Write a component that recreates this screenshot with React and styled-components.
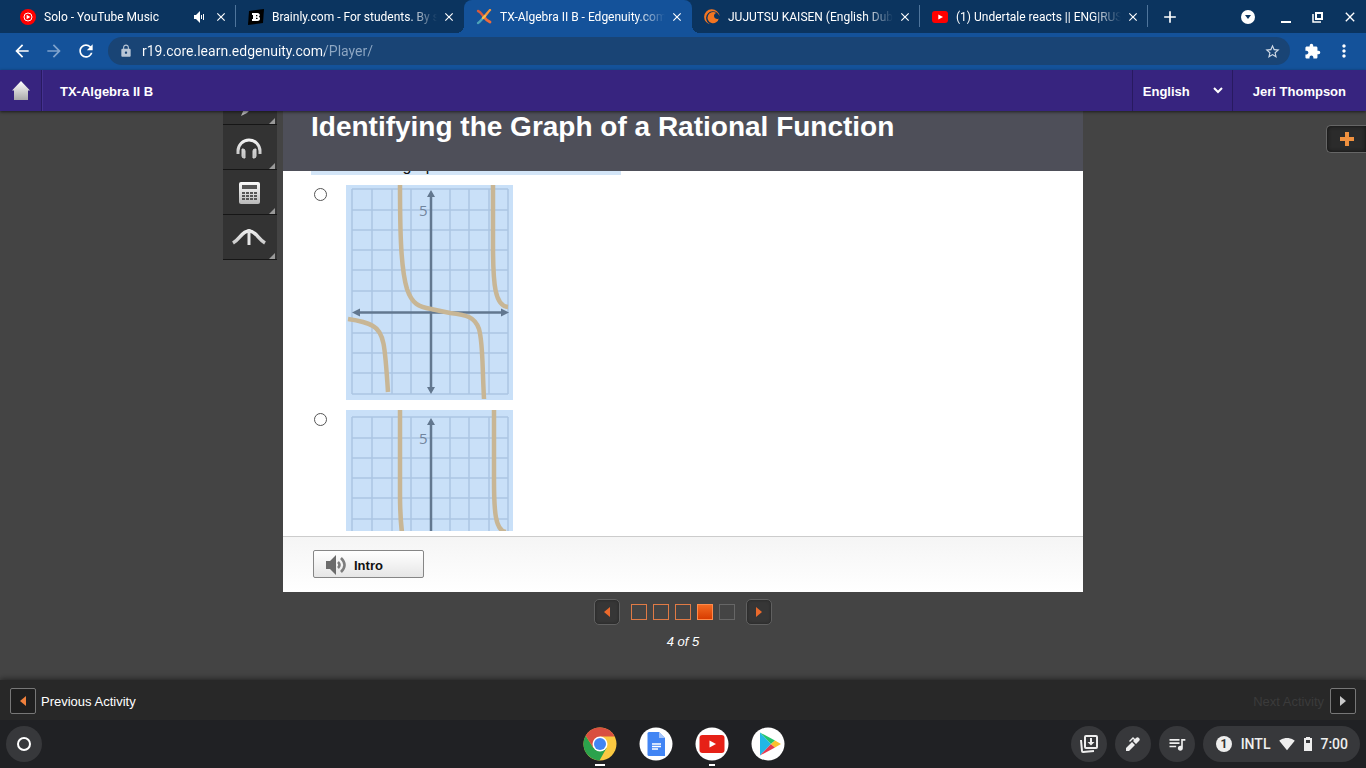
import React from "react";
import styled, { createGlobalStyle, css } from "styled-components";
import {
  MdAdd,
  MdArrowBack,
  MdArrowForward,
  MdClose,
  MdExtension,
  MdLock,
  MdMoreVert,
  MdQueueMusic,
  MdRefresh,
  MdSignalWifi4Bar,
  MdStarBorder,
} from "react-icons/md";

const GlobalStyle = createGlobalStyle`
  * {
    box-sizing: border-box;
  }

  body {
    margin: 0;
    background: #444;
    font-family: "Liberation Sans", Arial, sans-serif;
  }

  button, input, select {
    margin: 0;
    padding: 0;
    border: 0;
    background: none;
    color: inherit;
    font: inherit;
  }
`;

const Page = styled.div`
  display: flex;
  flex-direction: column;
  min-height: 100vh;
`;

/* browser */

const TabStrip = styled.div`
  display: flex;
  align-items: stretch;
  height: 33px;
  padding-left: 8px;
  background: #0b345f;
  color: #fff;
  font: 12px/16px Roboto, sans-serif;
`;

const Tab = styled.div`
  position: relative;
  display: flex;
  align-items: center;
  gap: 4px;
  flex: 0 1 228px;
  min-width: 0;
  padding: 0 6px 0 12px;
  border-right: 1px solid transparent;

  ${({ $active }) =>
    $active &&
    css`
      background: #14529a;
      border-radius: 8px 8px 0 0;

      &::before,
      &::after {
        content: "";
        position: absolute;
        bottom: 0;
        width: 8px;
        height: 8px;
      }

      &::before {
        left: -8px;
        background: radial-gradient(circle at 0 0, transparent 8px, #14529a 8px);
      }

      &::after {
        right: -9px;
        background: radial-gradient(circle at 100% 0, transparent 8px, #14529a 8px);
      }
    `}

  ${({ $divider }) =>
    $divider &&
    css`
      border-image: linear-gradient(transparent 6px, #4f759c 6px, #4f759c 26px, transparent 26px) 1;
      border-width: 0 1px 0 0;
    `}
`;

const TabTitle = styled.span`
  flex: 1;
  min-width: 0;
  overflow: hidden;
  white-space: nowrap;
  mask-image: linear-gradient(to left, transparent, #000 28px);
`;

const IconButton = styled.button`
  display: flex;
  flex: none;
  align-items: center;
  justify-content: center;
  width: ${({ $size }) => $size || 16}px;
  height: ${({ $size }) => $size || 16}px;
  color: ${({ $color }) => $color || "#fff"};
`;

const Favicon = styled.svg`
  flex: none;
  width: 16px;
  height: 16px;
  margin-right: 4px;
`;

const NewTab = styled.div`
  display: flex;
  align-items: center;
  justify-content: space-between;
  flex: 1;
  padding: 0 18px 0 12px;
`;

const WindowControls = styled.div`
  display: flex;
  align-items: center;
  gap: 12px;
  padding-right: 6px;
`;

const Toolbar = styled.div`
  display: flex;
  align-items: center;
  gap: 12px;
  height: 37px;
  padding: 0 12px 1px;
  background: #14529a;
`;

const Address = styled.div`
  display: flex;
  align-items: center;
  flex: 1;
  gap: 9px;
  height: 28px;
  padding: 0 8px 0 11px;
  border-radius: 14px;
  background: #194475;
  color: #b9c6d6;
`;

const UrlInput = styled.input`
  flex: 1;
  min-width: 0;
  height: 28px;
  font: 14px/28px Roboto, sans-serif;
  color: transparent;
  background: linear-gradient(to right, #fff 183px, #8fa8c4 183px);
  background-clip: text;
`;

/* course */

const CourseBar = styled.header`
  position: relative;
  z-index: 1;
  display: flex;
  align-items: stretch;
  height: 41px;
  background: #37247f;
  box-shadow: 0 1px 3px rgba(0, 0, 0, 0.6);
  color: #fff;
  font-size: 13px;
  font-weight: bold;
`;

const HomeLink = styled.a`
  display: flex;
  align-items: center;
  justify-content: center;
  width: 42px;
  border-right: 1px solid #281a60;
`;

const CourseTitle = styled.div`
  display: flex;
  align-items: center;
  flex: 1;
  padding: 2px 0 0 17px;
  border-left: 1px solid #443290;
`;

const Language = styled.label`
  position: relative;
  display: flex;
  align-items: center;
  width: 101px;
  border-left: 1px solid #281a60;
  border-right: 1px solid #281a60;

  svg {
    position: absolute;
    right: 9px;
    pointer-events: none;
  }
`;

const LanguageSelect = styled.select`
  width: 100%;
  height: 100%;
  padding: 2px 0 0 10px;
  appearance: none;
  outline: none;
`;

const UserName = styled.a`
  display: flex;
  align-items: center;
  padding: 2px 20px 0;
  color: #fff;
  text-decoration: none;
`;

const Stage = styled.main`
  position: relative;
  display: grid;
  grid-template-columns: 1fr minmax(0, 800px) 1fr;
  align-content: start;
  align-items: start;
  flex: 1;
  overflow: hidden;
  background: #444;
`;

const Tools = styled.div`
  justify-self: end;
  width: 54px;
  margin: -31px 6px 0 0;
`;

const Tool = styled.button`
  position: relative;
  display: flex;
  align-items: center;
  justify-content: center;
  width: 100%;
  height: 45px;
  padding: 2px 2px 0 0;
  background: #333;
  border-bottom: 1px solid #161616;

  &::after {
    content: "";
    position: absolute;
    right: 2px;
    bottom: 0;
    border: solid transparent;
    border-width: 0 0 6px 6px;
    border-bottom-color: #999;
  }
`;

const Frame = styled.section`
  background: #fff;
`;

const FrameHeader = styled.div`
  height: 60px;
  padding-left: 28px;
  background: #4e4f59;
  overflow: hidden;
`;

const FrameTitle = styled.h1`
  margin: 0;
  color: #fff;
  font-size: 28px;
  line-height: 32px;
  white-space: nowrap;
`;

const Question = styled.div`
  height: 360px;
  margin-bottom: 5px;
  padding-left: 28px;
  overflow: hidden;
`;

const Prompt = styled.p`
  width: 310px;
  margin: -14px 0 10px;
  background: #d3e5f7;
  color: #111;
  font-size: 16px;
  line-height: 18px;
  white-space: nowrap;
`;

const Choice = styled.label`
  display: flex;
  align-items: flex-start;
  gap: 19px;
  margin-bottom: 10px;
  padding-left: 3px;
`;

const Radio = styled.input`
  width: 13px;
  height: 13px;
  margin-top: 3px;
  border: 1px solid #555;
  border-radius: 50%;
  appearance: none;
  background: #fff;
`;

const GraphSvg = styled.svg`
  display: block;
  width: 167px;
  height: 215px;
  background: #c9e0f8;
  font: 15px "Open Sans", sans-serif;
`;

const FrameFooter = styled.div`
  display: flex;
  align-items: flex-start;
  height: 56px;
  padding: 13px 30px;
  border-top: 1px solid #ccc;
  background: linear-gradient(#f5f5f5, #fff);
`;

const IntroButton = styled.button`
  display: flex;
  align-items: center;
  gap: 7px;
  width: 111px;
  height: 28px;
  padding: 2px 0 0 12px;
  border: 1px solid #868686;
  border-radius: 2px;
  background: linear-gradient(#fff, #e6e6e6);
  color: #111;
  font-size: 13px;
  font-weight: bold;
`;

const Pager = styled.nav`
  display: flex;
  flex-direction: column;
  align-items: center;
  grid-column: 2;
  gap: 9px;
  padding-top: 7px;
`;

const PagerRow = styled.div`
  display: flex;
  align-items: center;
  gap: 11px;
`;

const Steps = styled.div`
  display: flex;
  gap: 6px;
`;

const stepColor = { done: "#e07a45", current: "#ff8a4a", locked: "#666" };

const Step = styled.button`
  width: 16px;
  height: 16px;
  border: 1px solid ${({ $state }) => stepColor[$state]};
  background: ${({ $state }) =>
    $state === "current" ? "linear-gradient(#f26a22, #d83c00)" : "none"};
`;

const ArrowButton = styled.button`
  display: flex;
  flex: none;
  align-items: center;
  justify-content: center;
  width: 26px;
  height: 26px;
  border: 1px solid ${({ $flat }) => ($flat ? "#777" : "#606060")};
  border-radius: ${({ $flat }) => ($flat ? 2 : 5)}px;
  background: ${({ $flat }) => ($flat ? "#1f1f1f" : "#363636")};
  box-shadow: ${({ $flat }) => ($flat ? "none" : "inset 0 0 3px #222")};
`;

const PageCount = styled.div`
  color: #fff;
  font-size: 13px;
  font-style: italic;
  line-height: 16px;
`;

const AddPanel = styled.button`
  position: absolute;
  top: 14px;
  right: 0;
  display: flex;
  align-items: center;
  justify-content: center;
  width: 40px;
  height: 28px;
  border: 1px solid #666;
  border-right: 0;
  border-radius: 5px 0 0 5px;
  background: #2b2b2b;
  box-shadow: inset 0 0 4px #111;
`;

const ActivityBar = styled.footer`
  position: relative;
  display: flex;
  align-items: center;
  justify-content: space-between;
  height: 40px;
  padding: 2px 10px 0;
  background: #282828;
  box-shadow: 0 -1px 6px rgba(0, 0, 0, 0.5);
  color: #fff;
  font-size: 13px;
`;

const Activity = styled.div`
  display: flex;
  align-items: center;
  gap: ${({ $disabled }) => ($disabled ? 6 : 5)}px;
  color: ${({ $disabled }) => ($disabled ? "#3b3b3b" : "#fff")};
`;

/* shelf */

const Shelf = styled.div`
  position: relative;
  display: grid;
  grid-template-columns: 1fr auto 1fr;
  align-items: center;
  height: 48px;
  padding: 0 6px;
  background: #202124;
`;

const RoundButton = styled.button`
  display: flex;
  align-items: center;
  justify-content: center;
  width: 36px;
  height: 36px;
  border-radius: 50%;
  background: #37383b;
  color: #eee;
`;

const Apps = styled.div`
  display: flex;
  gap: 22px;
  padding-left: 2px;
`;

const AppButton = styled.button`
  position: relative;
  width: 34px;
  height: 34px;

  svg {
    display: block;
  }

  &::after {
    content: "";
    position: absolute;
    bottom: -5px;
    left: 50%;
    width: ${({ $mark }) => $mark || 0}px;
    height: 2px;
    background: #fff;
    transform: translateX(-50%);
  }
`;

const StatusArea = styled.div`
  display: flex;
  gap: 8px;
  justify-self: end;
`;

const Tray = styled.button`
  display: flex;
  align-items: center;
  justify-content: space-between;
  width: 157px;
  height: 36px;
  padding: 0 12px 0 13px;
  border-radius: 18px;
  background: #37383b;
  color: #eee;
  font: 500 14px/16px Roboto, sans-serif;
`;

const Badge = styled.span`
  width: 16px;
  height: 16px;
  border-radius: 50%;
  background: #eee;
  color: #333;
  font-size: 12px;
  font-weight: bold;
  text-align: center;
`;

const MusicIcon = () => (
  <Favicon viewBox="0 0 16 16">
    <circle cx="8" cy="8" r="8" fill="#f00" />
    <circle cx="8" cy="8" r="4" fill="none" stroke="#fff" />
    <path d="M6.6 5.7 10.4 8l-3.8 2.3z" fill="#fff" />
  </Favicon>
);

const BrainlyIcon = () => (
  <Favicon viewBox="0 0 16 16">
    <path d="M1 2 16 0l-1 14L0 16z" fill="#000" />
    <path
      d="M4 4h5.5c2.6 0 3 3 1.2 3.8 2.2.9 1.6 4.2-1.2 4.2H4v-2h1V6H4zm4 2v1.3h.8c.9 0 .9-1.3 0-1.3zm0 2.7V10h1c1 0 1-1.3 0-1.3z"
      fill="#fff"
    />
  </Favicon>
);

const EdgenuityIcon = () => (
  <Favicon viewBox="0 0 16 16" fill="none" strokeLinecap="round">
    <path d="M14 1C12 3 10 6 8 8" stroke="#f2953c" strokeWidth="2.4" />
    <path d="M8 8c-2 2-4 5-6 6" stroke="#4ea4b8" strokeWidth="2.4" />
    <path d="M2 2c3 1 4 4 6 6" stroke="#d85a3c" strokeWidth="2.4" />
    <path d="M8 8c2 3 4 4 6 5" stroke="#ef6a3a" strokeWidth="2.8" />
    <path d="M7 9 9 7" stroke="#f6c04a" strokeWidth="2.4" />
  </Favicon>
);

const CrunchyIcon = () => (
  <Favicon viewBox="0 0 16 16">
    <path d="M15.5 7.3A7.7 7.7 0 1 0 7.3 15.6 6.8 6.8 0 1 1 15.5 7.3z" fill="#f47521" />
    <path d="M12.3 4a5.6 5.6 0 1 0 2.4 5.4A3 3 0 1 1 12.3 4z" fill="#f47521" />
  </Favicon>
);

const YoutubeIcon = () => (
  <Favicon viewBox="0 0 16 16">
    <rect y="2" width="16" height="12" rx="3" fill="#f00" />
    <path d="M6.3 5.4 11 8l-4.7 2.6z" fill="#fff" />
  </Favicon>
);

const SoundIcon = () => (
  <svg width="16" height="14" viewBox="0 0 16 14" fill="#fff">
    <path d="M1 5h2l4-4v12L3 9H1zM8 5h1v4H8zM10 4h1v6h-1z" />
  </svg>
);

const Triangle = ({ left, color = "#f0803c" }) => (
  <svg width="8" height="10" viewBox="0 0 8 10" fill={color}>
    <path d={left ? "M7 0v10L1 5z" : "M1 0v10l6-5z"} />
  </svg>
);

const Metal = ({ children, width = 36, height = 32 }) => (
  <svg width={width} height={height} viewBox={`0 0 ${width} ${height}`}>
    <defs>
      <linearGradient id="metal" gradientUnits="userSpaceOnUse" x1="0" y1="4" x2="0" y2="28">
        <stop offset="0" stopColor="#fff" />
        <stop offset="1" stopColor="#b5b5b5" />
      </linearGradient>
    </defs>
    {children}
  </svg>
);

const xLines = [6, 26, 46, 65, 104, 123, 143, 162];
const yLines = [4, 25, 45, 65, 85, 106, 148, 168, 188, 209];

const Graph = ({ shift = 0, curves }) => (
  <GraphSvg viewBox="0 0 167 215">
    <g transform={`translate(0 ${shift})`}>
      <g stroke="#abc6e3" strokeWidth="1.5" fill="none">
        {xLines.map((x) => (
          <path key={x} d={`M${x} 4V209`} />
        ))}
        {yLines.map((y) => (
          <path key={y} d={`M6 ${y}H162`} />
        ))}
      </g>
      <path d="M85 8V206M9 127.500H160" stroke="#62778f" strokeWidth="2.500" />
      <path
        d="M85 5l4 7h-8zM85 209l4-7h-8zM6 127.500l8-4v8zM163 127.500l-8-4v8z"
        fill="#62778f"
      />
      <text x="73" y="31" fill="#71859e">
        5
      </text>
    </g>
    <g stroke="#c8b695" strokeWidth="4.500" fill="none">
      {curves.map((d) => (
        <path key={d} d={d} />
      ))}
    </g>
  </GraphSvg>
);

const graphs = [
  {
    id: "a",
    shift: 0,
    curves: [
      "M2 134C16 136 22 138 27 141C38 147 39 160 42 207",
      "M54 0C54 50 55 84 61 104C66 119 73 122 85 124L104 128C121 130 129 132 133 144C137 158 136 176 138 214",
      "M147 0V60C147 100 149 121 162 122",
    ],
  },
  {
    id: "b",
    shift: 3,
    curves: [
      "M54 0V84C54 130 60 154 70 170",
      "M148 0V70C148 100 149 121 160 122",
    ],
  },
];

const tabs = [
  { title: "Solo - YouTube Music", icon: MusicIcon, sound: true, divider: true },
  { title: "Brainly.com - For students. By students.", icon: BrainlyIcon },
  { title: "TX-Algebra II B - Edgenuity.com", icon: EdgenuityIcon, active: true },
  { title: "JUJUTSU KAISEN (English Dub)", icon: CrunchyIcon, divider: true },
  { title: "(1) Undertale reacts || ENG|RUS", icon: YoutubeIcon, divider: true },
];

const steps = ["done", "done", "done", "current", "locked"];

const Browser = () => (
  <>
    <TabStrip role="tablist">
      {tabs.map(({ title, icon: Icon, sound, active, divider }) => (
        <Tab key={title} role="tab" aria-selected={!!active} $active={active} $divider={divider}>
          <Icon />
          <TabTitle>{title}</TabTitle>
          {sound && <SoundIcon />}
          <IconButton aria-label="Close tab">
            <MdClose size={14} />
          </IconButton>
        </Tab>
      ))}
      <NewTab>
        <IconButton $size={20} aria-label="New tab">
          <MdAdd size={20} />
        </IconButton>
        <IconButton $size={20} aria-label="Search tabs">
          <svg width="14" height="14" viewBox="0 0 14 14">
            <circle cx="7" cy="7" r="7" fill="#fff" />
            <path d="M4 5h6L7 9z" fill="#0b345f" />
          </svg>
        </IconButton>
      </NewTab>
      <WindowControls>
        <IconButton $size={20} aria-label="Minimize">
          <svg width="10" height="12" viewBox="0 0 10 12">
            <path d="M0 10h10v2H0z" fill="#fff" />
          </svg>
        </IconButton>
        <IconButton $size={20} aria-label="Restore">
          <svg width="12" height="12" viewBox="0 0 12 12" fill="none" stroke="#fff">
            <path d="M4 2h6v6H4z" strokeWidth="2" />
            <path d="M1 3v8h8" strokeWidth="1.500" />
          </svg>
        </IconButton>
        <IconButton $size={20} aria-label="Close window">
          <MdClose size={16} />
        </IconButton>
      </WindowControls>
    </TabStrip>
    <Toolbar>
      <IconButton $size={20} aria-label="Back">
        <MdArrowBack size={20} />
      </IconButton>
      <IconButton $size={20} $color="#7fa3cd" aria-label="Forward">
        <MdArrowForward size={20} />
      </IconButton>
      <IconButton $size={20} aria-label="Reload">
        <MdRefresh size={20} />
      </IconButton>
      <Address>
        <MdLock size={14} />
        <UrlInput aria-label="Address" defaultValue="r19.core.learn.edgenuity.com/Player/" />
        <IconButton $size={20} $color="#d0dae6" aria-label="Bookmark">
          <MdStarBorder size={17} />
        </IconButton>
      </Address>
      <IconButton $size={20} aria-label="Extensions">
        <MdExtension size={17} />
      </IconButton>
      <IconButton $size={20} aria-label="Menu">
        <MdMoreVert size={20} />
      </IconButton>
    </Toolbar>
  </>
);

const ToolList = () => (
  <Tools>
    <Tool aria-label="Highlighter">
      <Metal>
        <path d="M10 29l3-7L25 8l4 4-13 14z" fill="url(#metal)" />
      </Metal>
    </Tool>
    <Tool aria-label="Read aloud">
      <Metal>
        <path d="M7 22v-3a11 11 0 0 1 22 0v3" fill="none" stroke="url(#metal)" strokeWidth="3" />
        <path
          d="M11 17h1q2 0 2 2v7h-1q-2 0-2-2v-7zM25 17h-1q-2 0-2 2v7h1q2 0 2-2v-7z"
          fill="url(#metal)"
          stroke="#d5d5d5"
        />
      </Metal>
    </Tool>
    <Tool aria-label="Calculator">
      <Metal>
        <rect x="8" y="5" width="21" height="22" rx="2" fill="url(#metal)" />
        <path
          d="M11 8h15v4H11zM11 15h3v2h-3zM15 15h3v2h-3zM19 15h3v2h-3zM23 15h3v2h-3zM11 18h3v2h-3zM15 18h3v2h-3zM19 18h3v2h-3zM23 18h3v2h-3zM11 21h3v2h-3zM15 21h3v2h-3zM19 21h3v2h-3zM23 21h3v2h-3z"
          fill="#555"
        />
      </Metal>
    </Tool>
    <Tool aria-label="Graphing">
      <Metal>
        <path
          d="M2 21C9 17 11 9 18 9s9 8 16 12"
          fill="none"
          stroke="url(#metal)"
          strokeWidth="3.500"
        />
        <path d="M18 7v16" stroke="#e4e4e4" strokeWidth="3" />
      </Metal>
    </Tool>
  </Tools>
);

const Lesson = () => (
  <Stage>
    <ToolList />
    <Frame>
      <FrameHeader>
        <FrameTitle>Identifying the Graph of a Rational Function</FrameTitle>
      </FrameHeader>
      <Question>
        <Prompt>Which is the graph of the function below?</Prompt>
        {graphs.map((graph) => (
          <Choice key={graph.id}>
            <Radio type="radio" name="answer" aria-label={`Graph ${graph.id}`} />
            <Graph shift={graph.shift} curves={graph.curves} />
          </Choice>
        ))}
      </Question>
      <FrameFooter>
        <IntroButton>
          <svg width="21" height="20" viewBox="0 0 21 20">
            <path d="M0 6h4l6-6v20l-6-6H0z" fill="#6b6b6b" />
            <path
              d="M12 7q3 3 0 6M15 3q7 7 0 14"
              fill="none"
              stroke="#7d7d7d"
              strokeWidth="2.500"
            />
          </svg>
          Intro
        </IntroButton>
      </FrameFooter>
    </Frame>
    <Pager>
      <PagerRow>
        <ArrowButton aria-label="Previous page">
          <Triangle left color="#ec6a2c" />
        </ArrowButton>
        <Steps>
          {steps.map((state, i) => (
            <Step key={i} $state={state} aria-label={`Page ${i + 1}`} />
          ))}
        </Steps>
        <ArrowButton aria-label="Next page">
          <Triangle color="#ec6a2c" />
        </ArrowButton>
      </PagerRow>
      <PageCount>4 of 5</PageCount>
    </Pager>
    <AddPanel aria-label="Open panel">
      <svg width="14" height="14" viewBox="0 0 14 14" fill="#f0913f">
        <path d="M5 0h4v5h5v4H9v5H5V9H0V5h5z" />
      </svg>
    </AddPanel>
  </Stage>
);

const ShelfBar = () => (
  <Shelf>
    <RoundButton aria-label="Launcher">
      <svg width="14" height="14" viewBox="0 0 14 14">
        <circle cx="7" cy="7" r="6" fill="none" stroke="#fff" strokeWidth="2" />
      </svg>
    </RoundButton>
    <Apps>
      <AppButton $mark={10} aria-label="Chrome">
        <svg width="34" height="34" viewBox="0 0 34 34">
          <circle cx="17" cy="17" r="16.500" fill="#fbc941" />
          <path d="M17 17 2.700 8.700A16.500 16.500 0 0 1 31.600 9.500H17z" fill="#d94f40" />
          <path d="M2.700 8.700A16.500 16.500 0 0 0 16.500 33.500L23.500 21 10.500 21z" fill="#2ba24c" />
          <path d="M2.700 8.700 10.500 21 17 9.500z" fill="#d94f40" />
          <circle cx="17" cy="17" r="7.500" fill="#fff" />
          <circle cx="17" cy="17" r="6" fill="#4285f4" />
        </svg>
      </AppButton>
      <AppButton aria-label="Docs">
        <svg width="34" height="34" viewBox="0 0 34 34">
          <circle cx="17" cy="17" r="16.500" fill="#fff" />
          <path d="M10 5h10l6 6v18H10q-1.500 0-1.500-1.500v-21Q8.500 5 10 5z" fill="#4285f4" />
          <path d="M20 5l6 6h-6z" fill="#a6c5fa" />
          <path d="M13 17h9M13 19.500h9M13 22h6" stroke="#fff" strokeWidth="1.300" />
        </svg>
      </AppButton>
      <AppButton $mark={6} aria-label="YouTube">
        <svg width="34" height="34" viewBox="0 0 34 34">
          <circle cx="17" cy="17" r="16.500" fill="#fff" />
          <rect x="4.500" y="8" width="25" height="18" rx="3" fill="#e62117" />
          <path d="M14.500 13.500 21 17l-6.500 3.500z" fill="#fff" />
        </svg>
      </AppButton>
      <AppButton aria-label="Play Store">
        <svg width="34" height="34" viewBox="0 0 34 34">
          <circle cx="17" cy="17" r="16.500" fill="#fff" />
          <path d="M9 5.500v23L20 17z" fill="#22b8e6" />
          <path d="M9 5.500 24 13.500 20 17z" fill="#24c46c" />
          <path d="M9 28.500 24 20.500 20 17z" fill="#e8384f" />
          <path d="M24 13.500 30 17l-6 3.500L20 17z" fill="#fbc02d" />
        </svg>
      </AppButton>
    </Apps>
    <StatusArea>
      <RoundButton aria-label="Holding space">
        <svg width="20" height="20" viewBox="0 0 20 20" fill="none" stroke="currentColor" strokeWidth="2">
          <rect x="6" y="2" width="12" height="12" rx="1" />
          <path d="M2 6l1 11q0 1 1 1l11-1M12 4v6" />
          <path d="M8.500 8h7L12 11.500z" fill="currentColor" stroke="none" />
        </svg>
      </RoundButton>
      <RoundButton aria-label="Stylus">
        <svg width="14" height="14" viewBox="0 0 14 14" fill="currentColor">
          <path d="M0 14v-3l6-6 3 3-6 6zM7 4l1-1-1-1-3 3-1-1 4-4 2 2 1-1q1.500-1.500 3 0t0 3l-3 3z" />
        </svg>
      </RoundButton>
      <RoundButton aria-label="Media controls">
        <MdQueueMusic size={20} />
      </RoundButton>
      <Tray aria-label="Status tray">
        <Badge>1</Badge>
        <span>INTL</span>
        <MdSignalWifi4Bar size={16} />
        <svg width="8" height="14" viewBox="0 0 8 14" fill="currentColor">
          <path d="M2 0h4v1h2v13H0V1h2zM2 3v3h4V3z" fillRule="evenodd" />
        </svg>
        <span>7:00</span>
      </Tray>
    </StatusArea>
  </Shelf>
);

const App = () => {
  return (
    <>
      <GlobalStyle />
      <Page>
        <Browser />
        <CourseBar>
          <HomeLink href="#home" aria-label="Home">
            <svg width="20" height="20" viewBox="0 0 20 20">
              <defs>
                <linearGradient id="home" x1="0" y1="0" x2="0" y2="1">
                  <stop offset="0" stopColor="#fff" />
                  <stop offset="1" stopColor="#aaa" />
                </linearGradient>
              </defs>
              <path d="M10 0l9 9.500h-2V19H3V9.500H1z" fill="url(#home)" />
            </svg>
          </HomeLink>
          <CourseTitle>TX-Algebra II B</CourseTitle>
          <Language>
            <LanguageSelect aria-label="Language">
              <option>English</option>
            </LanguageSelect>
            <svg width="10" height="7" viewBox="0 0 10 7" fill="none" stroke="#fff" strokeWidth="2">
              <path d="M1 1l4 4 4-4" />
            </svg>
          </Language>
          <UserName href="#account">Jeri Thompson</UserName>
        </CourseBar>
        <Lesson />
        <ActivityBar>
          <Activity>
            <ArrowButton $flat aria-label="Previous Activity">
              <Triangle left />
            </ArrowButton>
            Previous Activity
          </Activity>
          <Activity $disabled>
            Next Activity
            <ArrowButton $flat aria-label="Next Activity">
              <Triangle color="#c8c8c8" />
            </ArrowButton>
          </Activity>
        </ActivityBar>
        <ShelfBar />
      </Page>
    </>
  );
};

export default App;
